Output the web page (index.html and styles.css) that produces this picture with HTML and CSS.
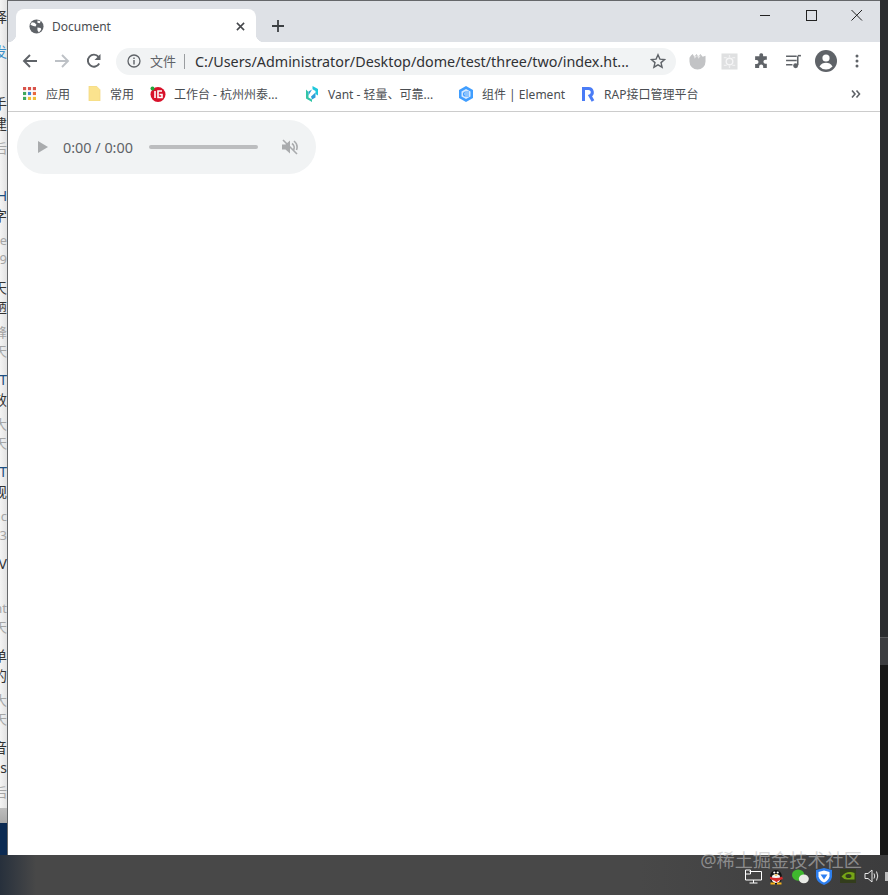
FILE: index.html
```html
<!DOCTYPE html>
<html lang="zh-CN">
<head>
<meta charset="utf-8">
<title>Document</title>
<link rel="stylesheet" href="styles.css">
</head>
<body>
<div class="desktop">
  <aside class="behind">
    <div class="behind-top"><p class="b-a">择</p><p class="b-b">发</p></div>
    <article class="art"><p class="t">-手</p><p class="t">建</p><p class="m">后</p><p class="m2"></p></article>
    <article class="art"><p class="t blue">H</p><p class="t">字</p><p class="m">pe</p><p class="m2">0.9</p></article>
    <article class="art"><p class="t">天</p><p class="t">陋</p><p class="m">峰</p><p class="m2">6天</p></article>
    <article class="art"><p class="t blue">IT</p><p class="t">效</p><p class="m">大</p><p class="m2">1天</p></article>
    <article class="art"><p class="t blue">T</p><p class="t">规</p><p class="m">nc</p><p class="m2">23</p></article>
    <article class="art"><p class="t">V</p><p class="t"></p><p class="m">nt</p><p class="m2">0天</p></article>
    <article class="art"><p class="t">单</p><p class="t">的</p><p class="m">大</p><p class="m2">3天</p></article>
    <article class="art last"><p class="t">音</p><p class="t">ss</p><p class="m">后</p></article>
    <div class="behind-grey"></div>
    <div class="behind-navy"></div>
  </aside>

  <main class="window">
    <header class="tabstrip">
      <div class="tab">
        <svg class="globe" viewBox="0 0 16 16"><circle cx="8" cy="8" r="7.500" fill="#5f6368"/><path d="M3 3.500l3 .5 2 2-1 2-2.500-.5L1.500 6zM9 1.500l3.500 1-1 2-2.500-.5zM9 9l3.500.5.500 2-2.500 3-1.500-2.500z" fill="#fff"/></svg>
        <span class="tab-title">Document</span>
        <svg class="tab-close" viewBox="0 0 10 10"><path d="M1 1l8 8M9 1l-8 8" stroke="#45474b" stroke-width="1.700"/></svg>
      </div>
      <svg class="newtab" viewBox="0 0 12 12"><path d="M6 0v12M0 6h12" stroke="#3c4043" stroke-width="1.800"/></svg>
      <div class="winctl">
        <svg viewBox="0 0 46 30"><path d="M18 14.500h10" stroke="#222" stroke-width="1"/></svg>
        <svg viewBox="0 0 46 30"><rect x="18.500" y="9.500" width="10" height="10" fill="none" stroke="#222" stroke-width="1"/></svg>
        <svg viewBox="0 0 46 30"><path d="M17.500 9l10.500 10.500M28 9L17.500 19.500" stroke="#222" stroke-width="1"/></svg>
      </div>
    </header>

    <div class="toolbar">
      <svg class="nav" viewBox="0 0 16 16"><path d="M15 8H2M8 2L2 8l6 6" fill="none" stroke="#5f6368" stroke-width="1.900"/></svg>
      <svg class="nav" viewBox="0 0 16 16"><path d="M1 8h13M8 2l6 6-6 6" fill="none" stroke="#bdc1c6" stroke-width="1.900"/></svg>
      <svg class="nav" viewBox="0 0 16 16"><path d="M13.200 10.500A6 6 0 1 1 12.500 3.800" fill="none" stroke="#5f6368" stroke-width="1.900"/><path d="M14.500 1v6h-6z" fill="#5f6368"/></svg>
      <div class="omnibox">
        <svg class="info" viewBox="0 0 14 14"><circle cx="7" cy="7" r="6" fill="none" stroke="#5f6368" stroke-width="1.300"/><path d="M7 6v4.500M7 3.500v1.500" stroke="#5f6368" stroke-width="1.400"/></svg>
        <span class="scheme">文件</span>
        <span class="url">C:/Users/Administrator/Desktop/dome/test/three/two/index.ht...</span>
        <svg class="star" viewBox="0 0 16 16"><path d="M8 1.800l1.900 4.300 4.700.4-3.600 3.100 1.100 4.600L8 11.800l-4.100 2.400L5 9.600 1.400 6.500l4.700-.4z" fill="none" stroke="#5f6368" stroke-width="1.400"/></svg>
      </div>
      <div class="exts">
        <svg class="ext" viewBox="0 0 18 18"><path d="M.5 5q1.500-3 3.500-4l1.500 3L8 1l2 3 2-3 2.500 3L17.500 3v6A8.500 8.500 0 0 1 .5 9z" fill="#c2c3c5"/><path d="M5 3l1 3 2.500-3 1.500 3 2.500-3" fill="#e6e6e7"/></svg>
        <svg class="ext" viewBox="0 0 18 18"><rect width="17" height="17" x=".5" y=".5" fill="#dfe0e1"/><circle cx="9" cy="9" r="3.500" fill="none" stroke="#f5f5f6" stroke-width="1.500"/><path d="M3 5h3M12 13h3M12 5h3M3 13h3M9 2v3M9 13v3" stroke="#f0f0f1" stroke-width="1.300"/></svg>
        <svg class="ext" viewBox="0 0 16 16"><path d="M6 1.500a1.800 1.800 0 0 1 3.500 0V3h3.500v3.300h-1.300a1.900 1.900 0 0 0 0 3.800H13V14H9.600v-1.200a1.900 1.900 0 0 0-3.800 0V14H2v-3.700h1.300a1.900 1.900 0 0 0 0-3.800H2V3h4z" fill="#5f6368"/></svg>
        <svg class="ext" viewBox="0 0 16 16"><path d="M1 3h10M1 7h10M1 11h6" stroke="#5f6368" stroke-width="1.500"/><path d="M12 3v8.500" stroke="#5f6368" stroke-width="1.500"/><circle cx="10" cy="12" r="2.300" fill="#5f6368"/><path d="M12 2.500h3" stroke="#5f6368" stroke-width="1.500"/></svg>
        <svg class="avatar" viewBox="0 0 22 22"><circle cx="11" cy="11" r="11" fill="#5f6368"/><circle cx="11" cy="8" r="3.600" fill="#fff"/><path d="M4.500 16.500c1.500-2.700 4-3.700 6.500-3.700s5 1 6.500 3.700a8.500 8.500 0 0 1-13 0z" fill="#fff"/></svg>
        <svg class="more" viewBox="0 0 4 14"><circle cx="2" cy="2" r="1.500" fill="#5f6368"/><circle cx="2" cy="7" r="1.500" fill="#5f6368"/><circle cx="2" cy="12" r="1.500" fill="#5f6368"/></svg>
      </div>
    </div>

    <nav class="bookmarks">
      <div class="bm bm-apps">
        <svg class="bm-ic" viewBox="0 0 14 14"><g><rect x="0" y="0" width="3.400" height="3.400" fill="#d9534a"/><rect x="5.300" y="0" width="3.400" height="3.400" fill="#d9534a"/><rect x="10.600" y="0" width="3.400" height="3.400" fill="#d9534a"/><rect x="0" y="5.300" width="3.400" height="3.400" fill="#3fa85c"/><rect x="5.300" y="5.300" width="3.400" height="3.400" fill="#4285d4"/><rect x="10.600" y="5.300" width="3.400" height="3.400" fill="#e8683f"/><rect x="0" y="10.600" width="3.400" height="3.400" fill="#3fa85c"/><rect x="5.300" y="10.600" width="3.400" height="3.400" fill="#f0be3a"/><rect x="10.600" y="10.600" width="3.400" height="3.400" fill="#f0be3a"/></g></svg>
        <span>应用</span>
      </div>
      <div class="bm bm-folder">
        <svg class="bm-ic" viewBox="0 0 14 16"><path d="M1 0h8l4 4v12H1z" fill="#fbe38e" stroke="#efd67d" stroke-width=".6"/></svg>
        <span>常用</span>
      </div>
      <div class="bm bm-work">
        <svg class="bm-ic lg" viewBox="0 0 16 16"><circle cx="8" cy="8.500" r="7.500" fill="#d8112a"/><path d="M5 5v7M12 5H8v6.500h4V8.500H9.500" fill="none" stroke="#fff" stroke-width="1.600"/><circle cx="2.500" cy="2.500" r="2" fill="#22a73c"/></svg>
        <span>工作台 - 杭州州泰...</span>
      </div>
      <div class="bm bm-vant">
        <svg class="bm-ic lg" viewBox="0 0 16 16"><path d="M8.500 0l5.500 3v6.500L11.500 8V5L8.500 3.300z" fill="#1fc8db"/><path d="M2 3.500L4.500 6v5.500l3.500 2V16l-6-3.500z" fill="#32c5a6"/><path d="M8 3.500L4.500 5.500v4zM11.500 6.500v5L8 13.500l-1-3z" fill="#2f9fd8"/></svg>
        <span>Vant - 轻量、可靠...</span>
      </div>
      <div class="bm bm-el">
        <svg class="bm-ic lg" viewBox="0 0 16 16"><path d="M8 0l7 4v8l-7 4-7-4V4z" fill="#409eff"/><path d="M8 3l4.500 2.500v5L8 13l-4.500-2.500v-5z" fill="#d5e9ff"/><path d="M11 6H7.500a1.200 1.200 0 0 0 0 4H11M6.500 8H11" fill="none" stroke="#409eff" stroke-width="1.200"/></svg>
        <span>组件 | Element</span>
      </div>
      <div class="bm bm-rap">
        <svg class="bm-ic lg" viewBox="0 0 16 16"><path d="M3.500 15V2.500h5a3.800 3.800 0 0 1 1.500 7.300L13 15" fill="none" stroke="#4a7cf6" stroke-width="3"/></svg>
        <span>RAP接口管理平台</span>
      </div>
      <svg class="bm-more" viewBox="0 0 10 8"><path d="M1 .5L4 4 1 7.500M5.500 .5L8.500 4l-3 3.500" fill="none" stroke="#5f6368" stroke-width="1.600"/></svg>
    </nav>

    <section class="page">
      <div class="player">
        <svg class="play" viewBox="0 0 10 12"><path d="M0 0l10 6-10 6z" fill="#a9abad"/></svg>
        <span class="time">0:00 / 0:00</span>
        <div class="track"></div>
        <svg class="mute" viewBox="0 0 18 18"><path d="M1 6.500h3.500L9 2.500v13l-4.500-4H1z" fill="#a9abad"/><path d="M11 5.500a5 5 0 0 1 1.500 6.500M13 3a8 8 0 0 1 2.500 9" fill="none" stroke="#a9abad" stroke-width="1.600"/><path d="M2 2l14 14" stroke="#a9abad" stroke-width="1.600"/></svg>
      </div>
    </section>
  </main>

  <aside class="right-edge">
    <div class="re-a"></div>
    <div class="re-b"></div>
    <div class="re-c"></div>
  </aside>

  <footer class="taskbar">
    <span class="watermark">@稀土掘金技术社区</span>
    <div class="tray">
      <svg class="net" viewBox="0 0 17 15"><path d="M4.500 2.500H16.500V11H.5V1h5v4h-5M8.500 11v3M4.500 14h8" fill="none" stroke="#fff" stroke-width="1"/></svg>
      <svg class="qq" viewBox="0 0 16 18"><ellipse cx="8" cy="10" rx="6" ry="7" fill="#111"/><ellipse cx="8" cy="11.500" rx="4.500" ry="4.500" fill="#f4f4f4"/><path d="M2 9.500q6 3 12 0l1 2.500-5 2-1.500 1.500L7 14 2 12z" fill="#d52b2b"/><circle cx="6.300" cy="5.500" r="1.100" fill="#fff"/><circle cx="9.700" cy="5.500" r="1.100" fill="#fff"/><path d="M6 7.500h4L8 9z" fill="#f6b11a"/><path d="M2.500 15.500h4.500v2h-4.500zM9 15.500h4.500v2H9z" fill="#f6b11a"/></svg>
      <svg class="wechat" viewBox="0 0 18 15"><ellipse cx="6.500" cy="6" rx="6.500" ry="6" fill="#3fb82e"/><ellipse cx="12.500" cy="10" rx="5.300" ry="4.700" fill="#e9ebe6"/></svg>
      <svg class="shield" viewBox="0 0 16 17"><path d="M8 0l8 2v7q-1 5.500-8 8Q1 14.500 0 9V2z" fill="#2d7ff0"/><path d="M8 2.500l5.500 1.500v4.500Q12.500 12.500 8 14.500 3.500 12.500 2.500 8.500V4z" fill="#fff"/><path d="M4.500 6.500h7L8 11.500z" fill="#2d7ff0"/></svg>
      <svg class="nv" viewBox="0 0 16 14"><rect width="16" height="14" fill="#333d1c"/><path d="M1.500 7.500Q7 1 14.500 4v6.500H8Q4 11 1.500 7.500z" fill="#76a516"/><ellipse cx="8.500" cy="7" rx="3" ry="2" fill="#333d1c"/></svg>
      <svg class="vol" viewBox="0 0 16 14"><path d="M1 4.500h3L8 1v12L4 9.500H1z" fill="none" stroke="#e8e8e8" stroke-width="1"/><path d="M10 4.500q1.500 2.500 0 5M12.500 2.500q2.500 4.500 0 9" fill="none" stroke="#e8e8e8" stroke-width="1"/></svg>
      <span class="tray-cut"></span>
    </div>
  </footer>
</div>
</body>
</html>
```

FILE: styles.css
```css
* { box-sizing: border-box; }
html, body { margin: 0; padding: 0; }
body {
  width: 888px;
  height: 895px;
  overflow: hidden;
  font-family: "Noto Sans", "Noto Sans CJK SC", sans-serif;
  background: #2c2d30;
}
p { margin: 0; }

.desktop {
  display: grid;
  grid-template-columns: 8px 872px 8px;
  grid-template-rows: 855px 40px;
  width: 888px;
  height: 895px;
}

/* page showing behind the browser window */
.behind {
  display: flex;
  flex-direction: column;
  overflow: hidden;
  background: linear-gradient(90deg, #f4f4f4 0, #e2e2e2 100%);
  border-right: 1px solid #66686a;
  font-size: 14px;
  line-height: 18px;
  color: #333;
  white-space: nowrap;
}
.behind p { height: 18px; display: flex; justify-content: flex-end; }
.behind-top { height: 95px; padding-top: 8px; }
.b-a { margin-bottom: 17px; }
.b-b { color: #3b8fc9; }
.art { height: 92px; flex: none; }
.art .t { height: 20px; }
.art .m { margin-top: 4px; color: #a5a5a5; font-size: 13px; }
.art .m2 { margin-top: 1px; color: #a5a5a5; font-size: 13px; }
.art .blue { color: #1d4f80; }
.art.last { height: 69px; }
.behind-grey { height: 15px; flex: none; background: linear-gradient(180deg, #bdbdbd, #a9a9a9); }
.behind-navy { flex: 1; background: #0b2a52; }

/* browser window */
.window {
  display: flex;
  flex-direction: column;
  background: #fff;
  min-width: 0;
  border-top: 1px solid #65676a;
}
.tabstrip {
  display: flex;
  align-items: flex-end;
  height: 41px;
  padding-left: 8px;
  background: #dee1e6;
  flex: none;
}
.tab {
  position: relative;
  display: flex;
  align-items: center;
  width: 240px;
  height: 33px;
  padding: 2px 11px 0 13px;
  background: #fff;
  border-radius: 8px 8px 0 0;
}
.tab::before,
.tab::after {
  content: "";
  position: absolute;
  bottom: 0;
  width: 8px;
  height: 8px;
}
.tab::before {
  left: -8px;
  background: radial-gradient(circle at 0 0, transparent 8px, #fff 8.5px);
}
.tab::after {
  right: -8px;
  background: radial-gradient(circle at 100% 0, transparent 8px, #fff 8.5px);
}
.globe { width: 15px; height: 15px; }
.tab-title { margin-left: 8px; flex: 1; font-size: 12px; color: #4a4d51; }
.tab-close { width: 9px; height: 9px; }
.newtab { width: 12px; height: 12px; margin: 0 0 10px 16px; }
.winctl { display: flex; margin: 0 0 0 auto; align-self: flex-start; }
.winctl svg { width: 46px; height: 30px; display: block; }

.toolbar {
  display: flex;
  align-items: center;
  height: 36px;
  padding: 2px 0 0 14px;
  flex: none;
}
.nav { width: 16px; height: 16px; margin-right: 16px; }
.toolbar .nav:nth-child(3) { margin-right: 14px; }
.omnibox {
  display: flex;
  align-items: center;
  width: 560px;
  height: 27px;
  padding: 0 10px 0 11px;
  background: #f1f3f4;
  border-radius: 14px;
}
.info { width: 14px; height: 14px; }
.scheme {
  margin-left: 9px;
  padding-right: 8px;
  border-right: 1px solid #9a9da0;
  font-size: 13px;
  line-height: 15px;
  color: #5f6368;
}
.url { margin-left: 10px; flex: 1; font-size: 14.33px; color: #303134; white-space: nowrap; }
.star { width: 16px; height: 16px; }
.exts { display: flex; align-items: center; margin-left: 13px; }
.ext { width: 17px; height: 17px; margin-right: 15px; }
.avatar { width: 22px; height: 22px; margin: 0 18px 0 -2px; }
.more { width: 4px; height: 14px; }

.bookmarks {
  display: flex;
  align-items: center;
  height: 34px;
  padding: 0 0 2px 15px;
  border-bottom: 1px solid #ccc;
  font-size: 12px;
  color: #4a4d51;
  white-space: nowrap;
  flex: none;
}
.bm { display: flex; align-items: center; }
.bm-ic { width: 13px; height: 13px; margin-right: 10px; flex: none; }
.bm-folder .bm-ic { height: 15px; margin-right: 9px; }
.bm-ic.lg { width: 16px; height: 16px; margin-right: 8px; }
.bm-apps { width: 65px; }
.bm-folder { width: 62px; }
.bm-work { width: 154px; }
.bm-vant { width: 154px; }
.bm-el { width: 122px; }
.bm-more { width: 10px; height: 8px; margin: 0 19px 0 auto; }

.page { flex: 1; padding: 8px 9px; }
.player {
  display: flex;
  align-items: center;
  width: 299px;
  height: 54px;
  padding: 0 0 0 21px;
  border-radius: 27px;
  background: #f1f3f4;
}
.play { width: 10px; height: 12px; flex: none; }
.time { margin-left: 15px; font-size: 14.4px; color: #5f6368; white-space: nowrap; }
.track { width: 109px; height: 4px; margin-left: 16px; border-radius: 2px; background: #bcbdbf; flex: none; }
.mute { width: 18px; height: 18px; margin-left: 23px; flex: none; }

.right-edge { display: flex; flex-direction: column; }
.re-a { height: 637px; background: #2b2d2f; }
.re-b { height: 28px; background: #3c3d40; border-top: 1px solid #5a5b5d; }
.re-c { flex: 1; background: #171717; }

/* taskbar */
.taskbar {
  grid-column: 1 / -1;
  display: flex;
  flex-direction: column;
  align-items: flex-end;
  background: linear-gradient(90deg, #27303c 0, #484848 36px, #484848 640px, #3c3c3d 100%);
}
.watermark {
  margin: -4px 26px 0 0;
  height: 18px;
  font-size: 18.2px;
  line-height: 18px;
  color: rgba(190, 190, 190, .6);
  white-space: nowrap;
}
.tray { display: flex; align-items: center; gap: 8px; margin: -2px 0 0 0; }
.tray svg { display: block; flex: none; }
.net { width: 17px; height: 15px; }
.qq { width: 16px; height: 18px; margin-left: -2px; }
.wechat { width: 17px; height: 15px; }
.shield { width: 16px; height: 17px; margin-left: -1px; }
.nv { width: 16px; height: 14px; }
.vol { width: 16px; height: 14px; }
.tray-cut { width: 3px; height: 9px; margin-left: -3px; background: #bbb; }
```
